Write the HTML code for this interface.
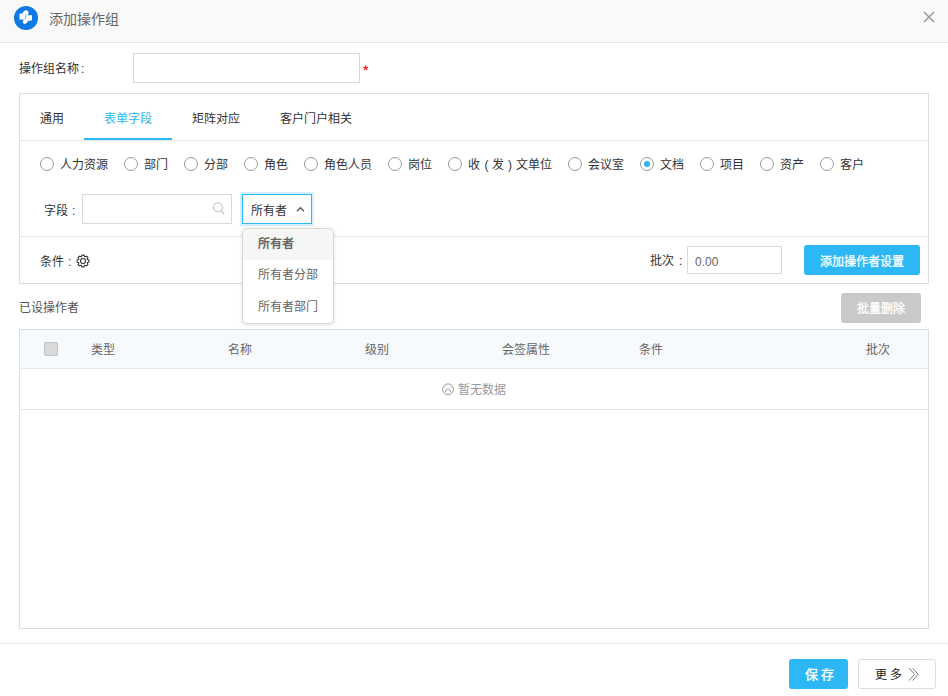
<!DOCTYPE html>
<html lang="zh-CN">
<head>
<meta charset="utf-8">
<style>
*{box-sizing:border-box;margin:0;padding:0}
html,body{width:948px;height:696px;overflow:hidden;background:#fff}
body{position:relative;font-family:"Liberation Sans",sans-serif;font-size:12px;color:#333}
.a{position:absolute}
.t{position:absolute;white-space:nowrap;line-height:16px}
#hdr{left:0;top:0;width:948px;height:43px;background:#f9f9f9;border-bottom:1px solid #e6e6e6}
.inp{position:absolute;border:1px solid #d9d9d9;background:#fff}
.radio{position:absolute;width:14px;height:14px;border:1px solid #999;border-radius:50%;top:157px}
.rl{position:absolute;top:157px;line-height:16px;white-space:nowrap;color:#333}
.th{position:absolute;top:342px;line-height:16px;color:#666;white-space:nowrap}
</style>
</head>
<body>
<!-- header -->
<div id="hdr" class="a"></div>
<svg class="a" style="left:14px;top:6px" width="24" height="24" viewBox="0 0 24 24">
  <circle cx="12" cy="12" r="12" fill="#0f7ae5"/>
  <path d="M5.5 8.2 L6.3 7.5 L8.6 7.5 Q9.4 4.6 11.6 4.3 Q14.6 4.2 14.6 6.8 Q14.4 9.2 12.2 11 L11.7 13.5 L5.5 13.6 Z" fill="#fff"/>
  <path d="M18 9.2 L18 13.8 L17.2 14.8 L14.4 14.8 Q12.8 17.9 10.8 18 Q8.6 17.8 8.8 15.6 Q9.6 13.4 11.6 11.8 L11.8 9.2 Z" fill="#fff"/>
  <path d="M12.4 8.4 L11.1 10 L12.1 11 L11 13.2" fill="none" stroke="#0f7ae5" stroke-width="0.6"/>
</svg>
<div class="t" style="left:49px;top:10px;font-size:14px;line-height:18px;color:#666">添加操作组</div>
<svg class="a" style="left:923px;top:10.6px" width="12" height="12" viewBox="0 0 12 12">
  <path d="M1 1 L11 11 M11 1 L1 11" stroke="#999" stroke-width="1.5"/>
</svg>

<!-- name row -->
<div class="t" style="left:19px;top:61px;color:#333">操作组名称<span style="margin-left:2px">:</span></div>
<div class="inp" style="left:133px;top:53px;width:227px;height:30px"></div>
<svg class="a" style="left:363px;top:65.3px" width="5.4" height="5.4" viewBox="0 0 6 6"><path d="M3.00 3.20 L3.00 0.80 M3.00 3.20 L5.28 2.46 M3.00 3.20 L4.41 5.14 M3.00 3.20 L1.59 5.14 M3.00 3.20 L0.72 2.46" stroke="#f22" stroke-width="1.3" stroke-linecap="round"/></svg>

<!-- panel -->
<div class="a" style="left:19px;top:93px;width:910px;height:191px;border:1px solid #ddd"></div>
<div class="a" style="left:20px;top:140px;width:908px;height:1px;background:#e5e5e5"></div>
<div class="t" style="left:40px;top:111px;color:#333">通用</div>
<div class="t" style="left:104px;top:111px;color:#2db7f5">表单字段</div>
<div class="a" style="left:84px;top:138px;width:88px;height:2px;background:#2db7f5"></div>
<div class="t" style="left:192px;top:111px;color:#333">矩阵对应</div>
<div class="t" style="left:280px;top:111px;color:#333">客户门户相关</div>

<!-- radios -->
<div class="radio" style="left:40px"></div><div class="rl" style="left:60px">人力资源</div>
<div class="radio" style="left:124px"></div><div class="rl" style="left:144px">部门</div>
<div class="radio" style="left:184px"></div><div class="rl" style="left:204px">分部</div>
<div class="radio" style="left:244px"></div><div class="rl" style="left:264px">角色</div>
<div class="radio" style="left:304px"></div><div class="rl" style="left:324px">角色人员</div>
<div class="radio" style="left:388px"></div><div class="rl" style="left:408px">岗位</div>
<div class="radio" style="left:448px"></div><div class="rl" style="left:468px">收<span style="display:inline-block;width:12px;text-align:center;padding-left:1px">(</span>发<span style="display:inline-block;width:12px;text-align:center;padding-right:0px">)</span>文单位</div>
<div class="radio" style="left:568px"></div><div class="rl" style="left:588px">会议室</div>
<div class="radio" style="left:640px"><div class="a" style="left:3px;top:3px;width:6px;height:6px;border-radius:50%;background:#2db7f5"></div></div><div class="rl" style="left:660px">文档</div>
<div class="radio" style="left:700px"></div><div class="rl" style="left:720px">项目</div>
<div class="radio" style="left:760px"></div><div class="rl" style="left:780px">资产</div>
<div class="radio" style="left:820px"></div><div class="rl" style="left:840px">客户</div>

<!-- field row -->
<div class="t" style="left:44px;top:203px;color:#333">字段</div><div class="t" style="left:72px;top:203px;color:#333">:</div>
<div class="inp" style="left:82px;top:194px;width:150px;height:30px"></div>
<svg class="a" style="left:211px;top:200px" width="16" height="17" viewBox="0 0 16 17">
  <circle cx="6.9" cy="7.3" r="4.6" fill="none" stroke="#bbb" stroke-width="1"/>
  <path d="M10.2 10.6 L13.3 14.4" stroke="#bbb" stroke-width="1.1"/>
</svg>
<div class="a" style="left:240px;top:192px;width:74px;height:34px;background:#d6eefc"></div>
<div class="a" style="left:242px;top:194px;width:70px;height:30px;border:1px solid #2db7f5;background:#fff"></div>
<div class="t" style="left:251px;top:203px;color:#333">所有者</div>
<svg class="a" style="left:295px;top:205px" width="11" height="8" viewBox="0 0 11 8">
  <path d="M2 6.2 L5.5 2.7 L9 6.2" fill="none" stroke="#555" stroke-width="1.3"/>
</svg>

<div class="a" style="left:20px;top:236px;width:908px;height:1px;background:#e5e5e5"></div>

<!-- condition row -->
<div class="t" style="left:40px;top:254px;color:#333">条件</div><div class="t" style="left:68px;top:254px;color:#333">:</div>
<svg class="a" style="left:76px;top:254px" width="14" height="14" viewBox="0 0 14 14">
  <path d="M5.28 2.84 L6.04 1.08 L7.96 1.08 L8.72 2.84 L10.51 2.14 L11.86 3.49 L11.16 5.28 L12.92 6.04 L12.92 7.96 L11.16 8.72 L11.86 10.51 L10.51 11.86 L8.72 11.16 L7.96 12.92 L6.04 12.92 L5.28 11.16 L3.49 11.86 L2.14 10.51 L2.84 8.72 L1.08 7.96 L1.08 6.04 L2.84 5.28 L2.14 3.49 L3.49 2.14 Z" fill="none" stroke="#333" stroke-width="1.1" stroke-linejoin="round"/><circle cx="7" cy="7" r="2.5" fill="none" stroke="#333" stroke-width="1.1"/>
</svg>
<div class="t" style="left:650px;top:253px;color:#333">批次</div><div class="t" style="left:679px;top:253px;color:#333">:</div>
<div class="inp" style="left:687px;top:246px;width:95px;height:28px"></div>
<div class="t" style="left:695px;top:254px;color:#666">0.00</div>
<div class="a" style="left:804px;top:245px;width:116px;height:30px;background:#2db7f5;border-radius:3px"></div>
<div class="t" style="left:820px;top:254px;color:#fff;-webkit-text-stroke:0.3px #fff">添加操作者设置</div>

<!-- operators -->
<div class="t" style="left:19px;top:300px;color:#555">已设操作者</div>
<div class="a" style="left:841px;top:293px;width:80px;height:30px;background:#c9c9c9;border-radius:3px"></div>
<div class="t" style="left:857px;top:301px;color:#fff;-webkit-text-stroke:0.3px #fff">批量删除</div>

<!-- table -->
<div class="a" style="left:19px;top:329px;width:910px;height:300px;border:1px solid #ddd"></div>
<div class="a" style="left:20px;top:330px;width:908px;height:38px;background:#f6fafd"></div>
<div class="a" style="left:20px;top:368px;width:908px;height:1px;background:#e0e9f0"></div>
<div class="a" style="left:44px;top:342px;width:14px;height:14px;background:#d9d9d9;border:1px solid #c2c2c2;border-radius:2px"></div>
<div class="th" style="left:91px">类型</div>
<div class="th" style="left:228px">名称</div>
<div class="th" style="left:365px">级别</div>
<div class="th" style="left:502px">会签属性</div>
<div class="th" style="left:639px">条件</div>
<div class="th" style="left:866px">批次</div>
<div class="a" style="left:20px;top:409px;width:908px;height:1px;background:#e5e5e5"></div>
<svg class="a" style="left:442px;top:383px" width="12" height="13" viewBox="0 0 12 13">
  <circle cx="6.05" cy="6.25" r="5.4" fill="none" stroke="#999" stroke-width="1"/>
  <circle cx="2.9" cy="4.5" r="0.45" fill="#999"/><circle cx="9.2" cy="4.5" r="0.45" fill="#999"/>
  <path d="M3.5 9 C3.7 5.3 8.2 5.3 8.4 9" fill="none" stroke="#999" stroke-width="1"/>
</svg>
<div class="t" style="left:458px;top:382px;color:#999">暂无数据</div>

<!-- footer -->
<div class="a" style="left:0;top:643px;width:948px;height:1px;background:#e9e9e9"></div>
<div class="a" style="left:789px;top:659px;width:59px;height:30px;background:#2db7f5;border-radius:3px"></div>
<div class="t" style="left:805px;top:666px;color:#fff;font-size:13px;line-height:18px;letter-spacing:3px;-webkit-text-stroke:0.35px #fff">保存</div>
<div class="a" style="left:858px;top:659px;width:78px;height:30px;border:1px solid #ddd;border-radius:3px;background:#fff"></div>
<div class="t" style="left:875px;top:666px;color:#222;font-size:12px;line-height:18px;letter-spacing:2.5px">更多</div>
<svg class="a" style="left:907px;top:666px" width="14" height="16" viewBox="0 0 14 16"><path d="M2.2 2.2 L7.6 8.3 L2.2 14.5 M5.6 2.2 L11.2 8.3 L5.6 14.5" fill="none" stroke="#777" stroke-width="1"/></svg>

<!-- dropdown -->
<div class="a" style="left:242px;top:228px;width:92px;height:96px;background:#fff;border:1px solid #d9d9d9;border-radius:5px;box-shadow:0 1px 4px rgba(0,0,0,0.12);overflow:hidden">
  <div class="a" style="left:0;top:0;width:90px;height:31px;background:#f6f6f6"></div>
  <div class="t" style="left:15px;top:7px;color:#666;font-weight:bold">所有者</div>
  <div class="t" style="left:15px;top:38px;color:#666">所有者分部</div>
  <div class="t" style="left:15px;top:70px;color:#666">所有者部门</div>
</div>
</body>
</html>
